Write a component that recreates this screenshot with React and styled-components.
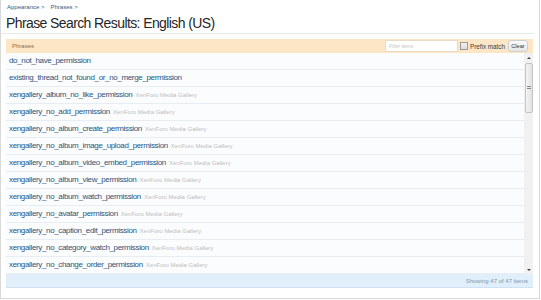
import React from "react";
import styled, { createGlobalStyle } from "styled-components";

const GlobalStyle = createGlobalStyle`
  html, body {
    margin: 0;
    padding: 0;
    background: #fff;
  }
  body {
    font-family: "Liberation Sans", Arial, sans-serif;
  }
`;

const phrases = [
  { title: "do_not_have_permission" },
  { title: "existing_thread_not_found_or_no_merge_permission" },
  { title: "xengallery_album_no_like_permission", addOn: true },
  { title: "xengallery_no_add_permission", addOn: true },
  { title: "xengallery_no_album_create_permission", addOn: true },
  { title: "xengallery_no_album_image_upload_permission", addOn: true },
  { title: "xengallery_no_album_video_embed_permission", addOn: true },
  { title: "xengallery_no_album_view_permission", addOn: true },
  { title: "xengallery_no_album_watch_permission", addOn: true },
  { title: "xengallery_no_avatar_permission", addOn: true },
  { title: "xengallery_no_caption_edit_permission", addOn: true },
  { title: "xengallery_no_category_watch_permission", addOn: true },
  { title: "xengallery_no_change_order_permission", addOn: true },
];

const Page = styled.div`
  box-sizing: border-box;
  width: 540px;
  height: 299px;
  border: 1px solid #d9d9d9;
  border-top: none;
  padding: 2px 6px 0 5px;
  display: flex;
  flex-direction: column;
`;

const Breadcrumb = styled.div`
  display: flex;
  gap: 6px;
  height: 10px;
  padding-left: 1px;
  font-size: 6px;
  line-height: 10px;
  color: #2f5b85;
`;

const TitleBar = styled.div`
  margin: 0 -2px 0 -5px;
  padding: 1.5px 0 1.5px 5px;
  border-bottom: 1px solid #e9e9e9;
`;

const Title = styled.h1`
  margin: 0;
  font-size: 14px;
  letter-spacing: -0.6px;
  line-height: 18px;
  font-weight: normal;
  color: #262626;
`;

const ListBlock = styled.div`
  margin-top: 5px;
  display: flex;
  flex-direction: column;
`;

const HeaderBar = styled.div`
  height: 14px;
  display: flex;
  align-items: center;
  padding: 0 5px 0 6px;
  background: #fce6c6;
  font-size: 6px;
  color: #8f6e45;
`;

const HeaderLabel = styled.span`
  margin-right: auto;
`;

const FilterInput = styled.div`
  box-sizing: border-box;
  width: 73px;
  height: 12px;
  background: #fff;
  border: 1px solid #eadcc4;
  font-size: 5px;
  font-style: italic;
  color: #c4c4c4;
  line-height: 10px;
  padding-left: 3px;
`;

const Check = styled.span`
  box-sizing: border-box;
  width: 8px;
  height: 8px;
  margin-left: 2px;
  border: 1px solid #9a9a9a;
  background: linear-gradient(#f2f2f2, #dcdcdc);
`;

const CheckLabel = styled.span`
  margin-left: 2px;
  font-size: 6.3px;
  color: #3a3a3a;
`;

const ClearButton = styled.span`
  box-sizing: border-box;
  margin-left: 3px;
  height: 12px;
  width: 20px;
  text-align: center;
  border: 1px solid #cfcfcf;
  border-radius: 3px;
  background: linear-gradient(#fbfbfb, #e6e6e6);
  font-size: 5.6px;
  line-height: 10px;
  color: #333;
`;

const Viewport = styled.div`
  display: flex;
  height: 221px;
`;

const Rows = styled.div`
  flex: 1;
  background: #fbfcfe;
  overflow: hidden;
`;

const Row = styled.div`
  height: 16px;
  border-bottom: 1px solid #e7edf3;
  padding-left: 3px;
  display: flex;
  align-items: baseline;
  white-space: nowrap;
  line-height: 16px;
`;

const PhraseTitle = styled.span`
  font-size: 8px;
  letter-spacing: -0.35px;
  color: #2c5579;
`;

const AddOn = styled.span`
  margin-left: 3px;
  font-size: 6px;
  color: #bdbdbd;
`;

const Scrollbar = styled.div`
  width: 9px;
  display: flex;
  flex-direction: column;
  align-items: center;
  background: #f1f1f1;
`;

const Arrow = styled.div`
  height: 9px;
  width: 9px;
  display: flex;
  align-items: center;
  justify-content: center;
  &::before {
    content: "";
    border-left: 2px solid transparent;
    border-right: 2px solid transparent;
    ${(p) =>
      p.$down
        ? "border-top: 2px solid #444;"
        : "border-bottom: 2px solid #444;"}
  }
`;

const Track = styled.div`
  flex: 1;
  width: 100%;
`;

const Thumb = styled.div`
  box-sizing: border-box;
  width: 8px;
  height: 50px;
  margin: 1px auto 0;
  border: 1px solid #c4c4c4;
  border-radius: 2px;
  background: linear-gradient(90deg, #f4f4f4, #e2e2e2);
  display: flex;
  align-items: center;
  justify-content: center;
  &::before {
    content: "";
    width: 4px;
    height: 4px;
    background: repeating-linear-gradient(#888 0 1px, transparent 1px 2px);
  }
`;

const Footer = styled.div`
  height: 13px;
  border-bottom: 1px solid #cde2f2;
  background: #e0eff9;
  display: flex;
  align-items: center;
  justify-content: flex-end;
  padding-right: 5px;
  font-size: 6px;
  color: #7f98ae;
`;

export default function App() {
  return (
    <>
      <GlobalStyle />
      <Page>
        <Breadcrumb>
          <span>Appearance &gt;</span>
          <span>Phrases &gt;</span>
        </Breadcrumb>
        <TitleBar>
          <Title>Phrase Search Results: English (US)</Title>
        </TitleBar>
        <ListBlock>
          <HeaderBar>
            <HeaderLabel>Phrases</HeaderLabel>
            <FilterInput>Filter items</FilterInput>
            <Check />
            <CheckLabel>Prefix match</CheckLabel>
            <ClearButton>Clear</ClearButton>
          </HeaderBar>
          <Viewport>
            <Rows>
              {phrases.map((p) => (
                <Row key={p.title}>
                  <PhraseTitle>{p.title}</PhraseTitle>
                  {p.addOn && <AddOn>XenForo Media Gallery</AddOn>}
                </Row>
              ))}
            </Rows>
            <Scrollbar>
              <Arrow />
              <Track>
                <Thumb />
              </Track>
              <Arrow $down />
            </Scrollbar>
          </Viewport>
          <Footer>Showing 47 of 47 items</Footer>
        </ListBlock>
      </Page>
    </>
  );
}
